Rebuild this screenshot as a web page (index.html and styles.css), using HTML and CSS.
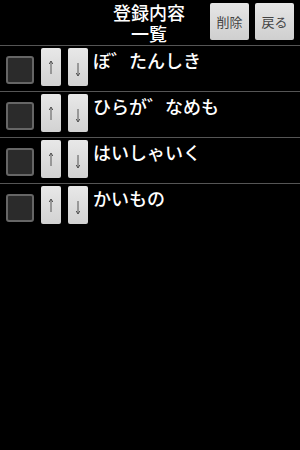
FILE: index.html
```html
<!DOCTYPE html>
<html lang="ja">
<head>
    <meta charset="UTF-8">
    <meta name="viewport" content="width=device-width, initial-scale=1.0">
    <title>登録内容一覧</title>
    <link rel="stylesheet" href="styles.css">
</head>
<body>
    <div class="header">
        <div class="title">登録内容一覧</div>
        <button class="top-btn">削除</button>
        <button class="top-btn">戻る</button>
    </div>

    <div class="list">
        <div class="row">
            <div class="check"></div>
            <button class="arrow-btn">
                <svg width="10" height="20" viewBox="0 0 10 20"><path d="M5 4 L5 17 M3.2 7 L5 4 L6.8 7" fill="none" stroke="#555" stroke-width="1"/></svg>
            </button>
            <button class="arrow-btn">
                <svg width="10" height="20" viewBox="0 0 10 20"><path d="M5 6 L5 19 M3.2 16 L5 19 L6.8 16" fill="none" stroke="#555" stroke-width="1"/></svg>
            </button>
            <div class="label">ぼ゛たんしき</div>
        </div>
        <div class="row">
            <div class="check"></div>
            <button class="arrow-btn">
                <svg width="10" height="20" viewBox="0 0 10 20"><path d="M5 4 L5 17 M3.2 7 L5 4 L6.8 7" fill="none" stroke="#555" stroke-width="1"/></svg>
            </button>
            <button class="arrow-btn">
                <svg width="10" height="20" viewBox="0 0 10 20"><path d="M5 6 L5 19 M3.2 16 L5 19 L6.8 16" fill="none" stroke="#555" stroke-width="1"/></svg>
            </button>
            <div class="label">ひらが゛なめも</div>
        </div>
        <div class="row">
            <div class="check"></div>
            <button class="arrow-btn">
                <svg width="10" height="20" viewBox="0 0 10 20"><path d="M5 4 L5 17 M3.2 7 L5 4 L6.8 7" fill="none" stroke="#555" stroke-width="1"/></svg>
            </button>
            <button class="arrow-btn">
                <svg width="10" height="20" viewBox="0 0 10 20"><path d="M5 6 L5 19 M3.2 16 L5 19 L6.8 16" fill="none" stroke="#555" stroke-width="1"/></svg>
            </button>
            <div class="label">はいしゃいく</div>
        </div>
        <div class="row">
            <div class="check"></div>
            <button class="arrow-btn">
                <svg width="10" height="20" viewBox="0 0 10 20"><path d="M5 4 L5 17 M3.2 7 L5 4 L6.8 7" fill="none" stroke="#555" stroke-width="1"/></svg>
            </button>
            <button class="arrow-btn">
                <svg width="10" height="20" viewBox="0 0 10 20"><path d="M5 6 L5 19 M3.2 16 L5 19 L6.8 16" fill="none" stroke="#555" stroke-width="1"/></svg>
            </button>
            <div class="label">かいもの</div>
        </div>
    </div>
</body>
</html>
```

FILE: styles.css
```css
body {
    margin: 0;
    background-color: #000;
    color: #fff;
    font-family: "Noto Sans CJK JP", "Noto Sans", sans-serif;
}

.header {
    display: flex;
    align-items: flex-start;
    height: 45px;
    border-bottom: 1px solid #555;
    padding-left: 110px;
}

.title {
    width: 80px;
    font-size: 18px;
    font-weight: 500;
    line-height: 21px;
    text-align: center;
    padding-top: 2px;
    margin-right: 22px;
}

.top-btn {
    width: 40px;
    height: 37px;
    margin-top: 3px;
    margin-right: 6px;
    padding: 0;
    border: none;
    border-radius: 2px;
    background: linear-gradient(#e6e6e6, #cfcfcf);
    color: #444;
    font-family: "Noto Sans CJK JP", sans-serif;
    font-size: 13px;
}

.row {
    display: flex;
    align-items: flex-start;
    height: 45px;
    padding-top: 2px;
    box-sizing: border-box;
}

.row + .row {
    border-top: 1px solid #555;
    height: 46px;
}

.check {
    width: 24px;
    height: 24px;
    margin: 8px 6px 0 6px;
    border: 2px solid #666;
    border-radius: 3px;
    background-color: #2b2b2b;
}

.arrow-btn {
    width: 20px;
    height: 38px;
    margin-left: 1px;
    margin-right: 6px;
    padding: 0;
    border: none;
    border-radius: 2px;
    background: linear-gradient(#e8e8e8, #d2d2d2);
    display: flex;
    align-items: center;
    justify-content: center;
}

.label {
    font-size: 18px;
    font-weight: 500;
    line-height: 24px;
    margin-left: -1px;
}
```
